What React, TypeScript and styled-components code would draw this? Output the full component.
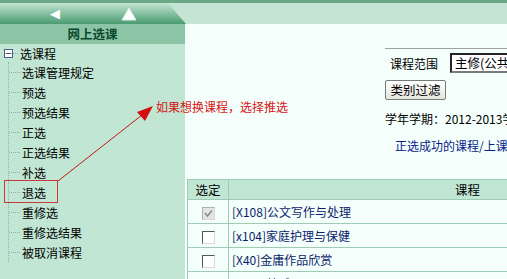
import React from "react";
import styled, { createGlobalStyle } from "styled-components";

const GlobalStyle = createGlobalStyle`
  html, body {
    margin: 0;
    padding: 0;
    overflow: hidden;
    background: #f4fffb;
  }
  body {
    font-family: "Noto Sans CJK SC", "DejaVu Sans", sans-serif;
    font-size: 12px;
  }
`;

const menuItems = [
  "选课管理规定",
  "预选",
  "预选结果",
  "正选",
  "正选结果",
  "补选",
  "退选",
  "重修选",
  "重修选结果",
  "被取消课程",
];

const courses = [
  { code: "[X108]公文写作与处理", checked: true, disabled: true },
  { code: "[x104]家庭护理与保健", checked: false, disabled: false },
  { code: "[X40]金庸作品欣赏", checked: false, disabled: false },
  { code: "[X151]篮球", checked: false, disabled: false },
];

export default function App() {
  return (
    <>
      <GlobalStyle />
      <Page>
        <TopBar>
          <Tab>
            <LeftArrow>◀</LeftArrow>
            <UpArrow viewBox="0 0 16 14">
              <path d="M8 1 L15 13 L1 13 Z" fill="#fff" stroke="#d8eee2" strokeWidth="1" />
            </UpArrow>
          </Tab>
        </TopBar>
        <Body>
          <Sidebar>
            <SideHeader>网上选课</SideHeader>
            <Tree>
              <TreeRoot>
                <Collapse>−</Collapse>
                <Stub $short />
                <span>选课程</span>
              </TreeRoot>
              <TreeChildren>
                {menuItems.map((item) => (
                  <TreeItem key={item}>
                    <Stub />
                    <span>{item}</span>
                  </TreeItem>
                ))}
              </TreeChildren>
            </Tree>
          </Sidebar>
          <Main>
            <FilterPanel>
              <FilterRow>
                <span>课程范围</span>
                <Select>主修(公共选修课)</Select>
              </FilterRow>
              <Button>类别过滤</Button>
              <Term>学年学期：2012-2013学年第二学期</Term>
              <Link>正选成功的课程/上课时间</Link>
            </FilterPanel>
            <Table>
              <thead>
                <tr>
                  <HeadCell $narrow>选定</HeadCell>
                  <HeadCell>课程</HeadCell>
                </tr>
              </thead>
              <tbody>
                {courses.map((c) => (
                  <tr key={c.code}>
                    <CheckCell>
                      <CheckBox $disabled={c.disabled}>
                        {c.checked && (
                          <svg width="11" height="11" viewBox="0 0 11 11">
                            <path d="M2 5 L4.5 8 L9 2.5" fill="none" stroke="#8c8c8c" strokeWidth="1.6" />
                          </svg>
                        )}
                      </CheckBox>
                    </CheckCell>
                    <CourseCell>{c.code}</CourseCell>
                  </tr>
                ))}
              </tbody>
            </Table>
          </Main>
        </Body>
        <Highlight />
        <Note>如果想换课程，选择推选</Note>
        <Overlay width="507" height="279">
          <line x1="58" y1="181" x2="142" y2="115" stroke="#c01818" strokeWidth="1" />
          <path d="M153 106 L137 112 L145 121 Z" fill="#d01010" />
        </Overlay>
      </Page>
    </>
  );
}

const Page = styled.div`
  position: relative;
  width: 507px;
  height: 279px;
  overflow: hidden;
  display: flex;
  flex-direction: column;
`;

const TopBar = styled.div`
  height: 21px;
  border-top: 3px solid #6aa888;
  background: #c6e4d4;
  display: flex;
`;

const Tab = styled.div`
  width: 186px;
  height: 21px;
  background: linear-gradient(#c4e2d2 0%, #8cc4a6 45%, #4a9a72 100%);
  clip-path: polygon(0 0, 168px 0, 186px 100%, 0 100%);
  display: flex;
  align-items: center;
`;

const LeftArrow = styled.span`
  margin-left: 50px;
  color: #fff;
  font-family: "DejaVu Sans", sans-serif;
  font-size: 13px;
  line-height: 1;
`;

const UpArrow = styled.svg`
  width: 16px;
  height: 14px;
  margin-left: 61px;
`;

const Body = styled.div`
  flex: 1;
  display: flex;
  min-height: 0;
`;

const Sidebar = styled.div`
  width: 185px;
  flex-shrink: 0;
  background: #c2e6d4;
  display: flex;
  flex-direction: column;
`;

const SideHeader = styled.div`
  height: 20px;
  line-height: 20px;
  background: #8cc4a6;
  color: #0a4a2c;
  font-weight: bold;
  font-size: 12.5px;
  text-align: center;
`;

const Tree = styled.div`
  padding: 0 0 0 4px;
  color: #000;
`;

const TreeRoot = styled.div`
  height: 18px;
  display: flex;
  align-items: center;
`;

const Collapse = styled.span`
  width: 9px;
  height: 9px;
  border: 1px solid #4a5c8c;
  background: #fff;
  box-sizing: border-box;
  display: flex;
  align-items: center;
  justify-content: center;
  font-size: 9px;
  line-height: 1;
  color: #1a2a5a;
  font-family: "DejaVu Sans", sans-serif;
`;

const TreeChildren = styled.div`
  margin-left: 4px;
  border-left: 1px dotted #94aabb;
`;

const Stub = styled.span<{ $short?: boolean }>`
  display: inline-block;
  width: ${(p) => (p.$short ? "5px" : "11px")};
  margin-right: 2px;
  border-top: 1px dotted #94aabb;
`;

const TreeItem = styled.div`
  height: 20px;
  display: flex;
  align-items: center;
`;

const Main = styled.div`
  flex: 1;
  min-width: 0;
  background: #f4fffb;
  overflow: hidden;
  padding-left: 2px;
`;

const FilterPanel = styled.div`
  margin-left: 198px;
  margin-top: 24px;
  border-top: 1px solid #a0a0a0;
  width: 400px;
  padding-top: 4px;
`;

const FilterRow = styled.div`
  display: flex;
  align-items: center;
  gap: 12px;
  padding-left: 5px;
  height: 20px;
`;

const Select = styled.div`
  height: 20px;
  box-sizing: border-box;
  border: 2px inset #7a7a7a;
  background: #fff;
  padding-left: 3px;
  line-height: 16px;
  white-space: nowrap;
  font-size: 12.5px;
`;

const Button = styled.div`
  margin-top: 7px;
  width: 61px;
  height: 20px;
  box-sizing: border-box;
  border: 1px solid #6f7f78;
  border-radius: 2px;
  background: linear-gradient(#ffffff, #e6e6e0);
  text-align: center;
  line-height: 18px;
  font-size: 12.5px;
`;

const Term = styled.div`
  margin-top: 11px;
  height: 16px;
  line-height: 16px;
  white-space: nowrap;
`;

const Link = styled.div`
  margin-top: 10px;
  margin-left: 10px;
  color: #0a1c8c;
  white-space: nowrap;
`;

const Table = styled.table`
  margin-top: 25px;
  border-collapse: collapse;
  width: 520px;
  background: #f4fffb;
  & td,
  & th {
    border: 1px solid #9ccdb4;
    padding: 0;
  }
`;

const HeadCell = styled.th<{ $narrow?: boolean }>`
  height: 19px;
  width: ${(p) => (p.$narrow ? "40px" : "auto")};
  background: #c2e6d4;
  font-weight: normal;
  font-size: 12.5px;
  color: #000;
`;

const CheckCell = styled.td`
  height: 23px;
  text-align: center;
  vertical-align: middle;
`;

const CheckBox = styled.span<{ $disabled?: boolean }>`
  display: inline-flex;
  align-items: center;
  justify-content: center;
  width: 13px;
  height: 13px;
  box-sizing: border-box;
  border: 1px solid ${(p) => (p.$disabled ? "#b0b0b0" : "#555")};
  border-right-color: #d8d8d8;
  border-bottom-color: #d8d8d8;
  background: ${(p) => (p.$disabled ? "#e4e4e4" : "#fff")};
  vertical-align: middle;
`;

const CourseCell = styled.td`
  padding-left: 3px !important;
  color: #0c1c6c;
  white-space: nowrap;
`;

const Highlight = styled.div`
  position: absolute;
  left: 4px;
  top: 180px;
  width: 54px;
  height: 23px;
  box-sizing: border-box;
  border: 1px solid #c83a3a;
`;

const Note = styled.div`
  position: absolute;
  left: 156px;
  top: 98px;
  color: #d41414;
  font-size: 12px;
  white-space: nowrap;
`;

const Overlay = styled.svg`
  position: absolute;
  left: 0;
  top: 0;
  pointer-events: none;
`;
